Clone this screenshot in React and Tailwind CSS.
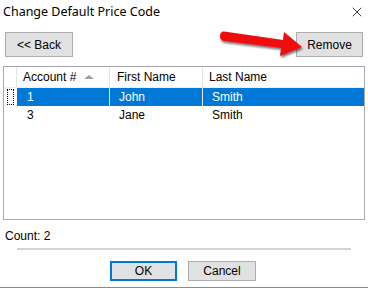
import { X } from "lucide-react";

const ROWS = [
  { id: "1", first: "John", last: "Smith", selected: true },
  { id: "3", first: "Jane", last: "Smith", selected: false },
];

function WinButton({ children, className = "" }) {
  return (
    <button
      className={`flex items-center justify-center bg-[#e1e1e1] text-[12px] text-black ${className}`}
    >
      {children}
    </button>
  );
}

function RedArrow() {
  return (
    <svg
      className="absolute left-[218px] top-[29px]"
      width="90"
      height="32"
      viewBox="0 0 90 32"
    >
      <defs>
        <filter id="sh" x="-20%" y="-50%" width="140%" height="200%">
          <feDropShadow dx="1" dy="2" stdDeviation="1.3" floodColor="#000" floodOpacity="0.55" />
        </filter>
      </defs>
      <path
        d="M6 2.5 C3 2.5 2 5 2 7.5 C2 10 4 12 6.5 12 L63 19 L62 27 L84 18 L66 3 L65 11 Z"
        fill="#f00a0a"
        filter="url(#sh)"
      />
    </svg>
  );
}

export default function App() {
  return (
    <div className="relative w-[368px] h-[288px] bg-white border-b border-[#4a9ce0] font-['Liberation_Sans',sans-serif] text-black">
      <div className="flex items-center justify-between h-[24px] pl-[3px] pr-[3px]">
        <span className="text-[12.5px] font-['Noto_Sans',sans-serif]">Change Default Price Code</span>
        <X size={16} strokeWidth={1.1} className="text-black" />
      </div>

      <div className="flex justify-between px-[5px] mt-[8px]">
        <WinButton className="w-[68px] h-[25px] border border-[#adadad]">&lt;&lt; Back</WinButton>
        <WinButton className="w-[67px] h-[25px] border border-[#adadad]">Remove</WinButton>
      </div>

      <div className="mx-[3px] mt-[9px] h-[154px] border border-[#a9a7b3] text-[12px]">
        <div className="flex h-[21px] border-b border-[#f0f0f0]">
          <div className="w-[13px] border-r border-[#e5e5e5]" />
          <div className="w-[93px] flex items-center pl-[6px] border-r border-[#e5e5e5]">
            Account #
            <span className="ml-[8px] w-0 h-0 border-l-[5px] border-r-[5px] border-b-[4px] border-l-transparent border-r-transparent border-b-[#a0a0a0]" />
          </div>
          <div className="w-[93px] flex items-center pl-[7px] border-r border-[#e5e5e5]">First Name</div>
          <div className="flex-1 flex items-center pl-[6px]">Last Name</div>
        </div>
        {ROWS.map((row) => (
          <div key={row.id} className="flex h-[18px]">
            <div className="w-[13px] flex items-center">
              {row.selected && (
                <div className="ml-[3px] w-[7px] h-[16px] border border-dotted border-black" />
              )}
            </div>
            <div
              className={`flex flex-1 ${row.selected ? "bg-[#0078d7] text-white" : ""}`}
            >
              <div className={`w-[93px] flex items-center pl-[10px] ${row.selected ? "border-r border-[#e8e8e8]" : ""}`}>{row.id}</div>
              <div className={`w-[93px] flex items-center pl-[9px] ${row.selected ? "border-r border-[#e8e8e8]" : ""}`}>{row.first}</div>
              <div className="flex-1 flex items-center pl-[9px]">{row.last}</div>
            </div>
          </div>
        ))}
      </div>

      <div className="pl-[5px] mt-[9px] text-[12px] leading-[14px]">Count: 2</div>

      <div className="mx-[17px] mt-[5px] h-[2px] bg-[#d4d4d4]" />

      <div className="flex justify-center gap-[11px] mt-[11px] pr-[2px]">
        <WinButton className="w-[67px] h-[20px] border-2 border-[#0078d7]">OK</WinButton>
        <WinButton className="w-[68px] h-[20px] border border-[#adadad]">Cancel</WinButton>
      </div>

      <RedArrow />
    </div>
  );
}
